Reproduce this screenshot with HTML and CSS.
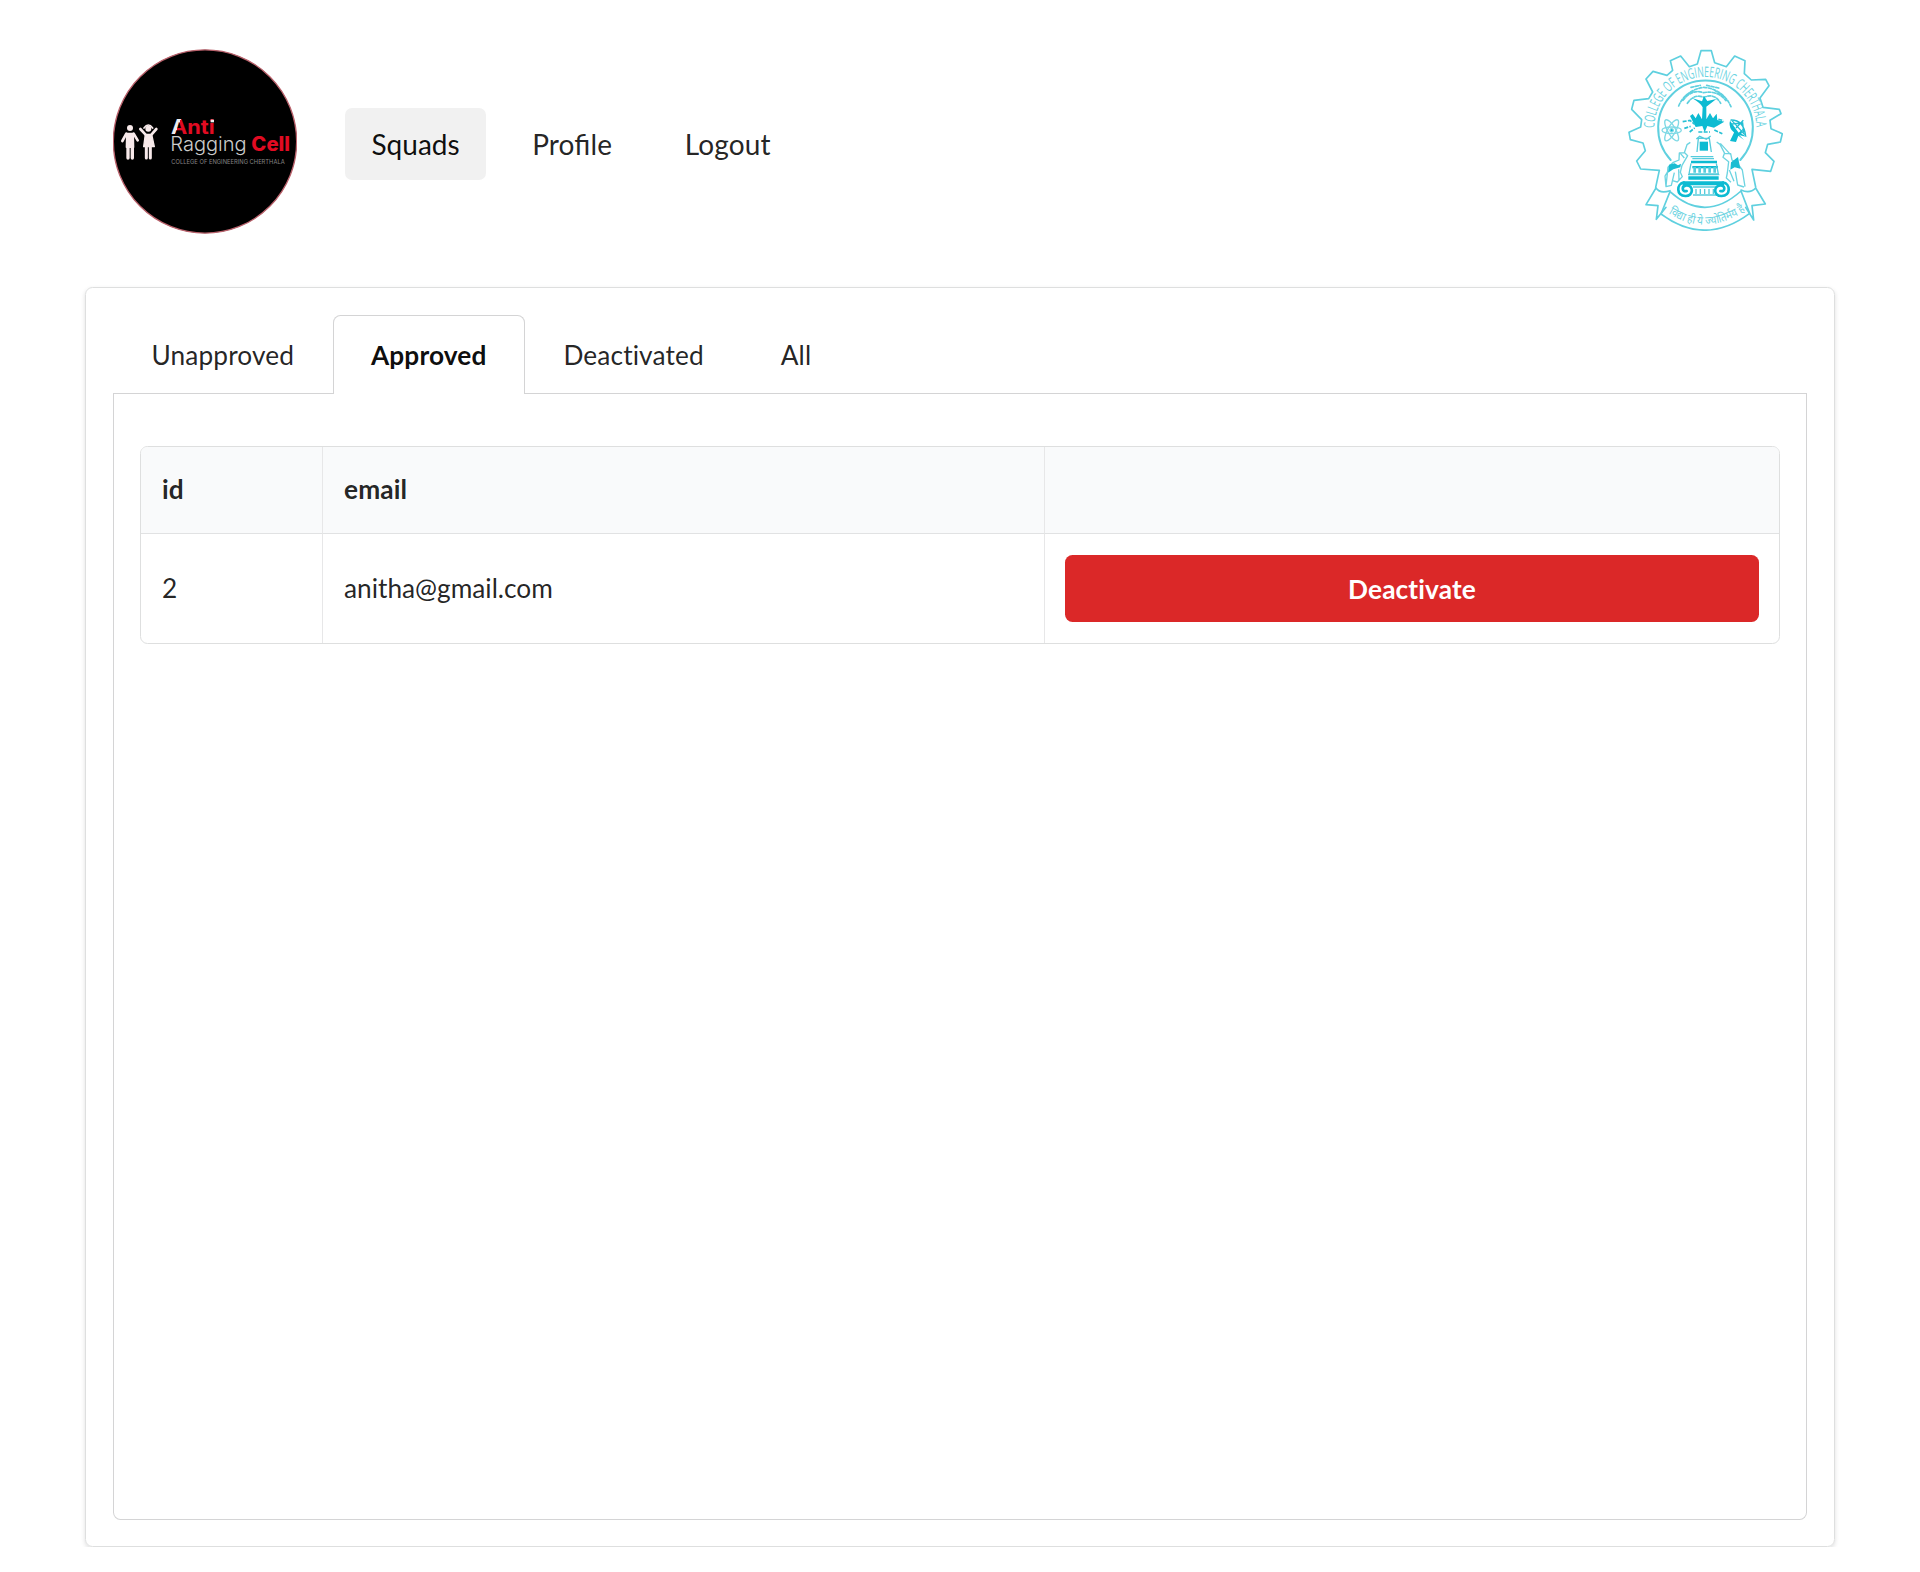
FILE: index.html
```
<!DOCTYPE html>
<html lang="en">
<head>
<meta charset="utf-8">
<title>Anti Ragging Cell</title>
<link rel="stylesheet" href="styles.css">
</head>
<body>
<header class="header">
  <svg class="logo" viewBox="39 27 552 555" role="img" aria-label="Anti Ragging Cell">
    <defs>
      <linearGradient id="anti" gradientUnits="userSpaceOnUse" x1="230" y1="258" x2="238" y2="261">
        <stop offset="0.45" stop-color="#eee"/><stop offset="0.55" stop-color="#e10b22"/>
      </linearGradient>
    </defs>
    <circle cx="315" cy="304.500" r="275" fill="#000" stroke="#b9616b" stroke-width="4"/>
    <g fill="#f7e9ea" stroke="#f7e9ea" stroke-linecap="round" stroke-linejoin="round">
      <circle cx="90" cy="264" r="9" stroke="none"/>
      <path d="M80 280h20l1 42H79z" stroke-width="4"/>
      <path d="M79 281L67 303M101 281L113 301" fill="none" stroke-width="8"/>
      <path d="M84 320v34M97 320v34" fill="none" stroke-width="10"/>
      <circle cx="145" cy="266" r="9" stroke="none"/>
      <path d="M136 283h19l8 37h-32z" stroke-width="4"/>
      <path d="M136 283L121 267M155 283L169 267" fill="none" stroke-width="8"/>
      <path d="M132 264Q145 246 158 264" fill="none" stroke-width="5"/>
      <path d="M139 320v34M151 320v34" fill="none" stroke-width="9"/>
    </g>
    <text class="logo-anti" x="213" y="283" textLength="131" lengthAdjust="spacingAndGlyphs" fill="url(#anti)">Anti</text>
    <rect x="332" y="239" width="10" height="8" fill="#eee"/>
    <text class="logo-ragging" x="211" y="332" textLength="229" lengthAdjust="spacingAndGlyphs">Ragging</text>
    <text class="logo-cell" x="454" y="332" textLength="116" lengthAdjust="spacingAndGlyphs">Cell</text>
    <text class="logo-college" x="214" y="373" textLength="340" lengthAdjust="spacingAndGlyphs">COLLEGE OF ENGINEERING CHERTHALA</text>
  </svg>
  <nav class="nav">
    <a class="nav-item active">Squads</a>
    <a class="nav-item">Profile</a>
    <a class="nav-item">Logout</a>
  </nav>
  <svg class="emblem" viewBox="54 27 465 546" role="img" aria-label="College of Engineering Cherthala">
    <defs>
      <path id="ring" d="M133 264A153 153 0 0 1 439 264"/>
      <path id="ribbon" d="M172 518Q285 592 402 514"/>
    </defs>
    <g fill="none" stroke="#5fd0df" stroke-width="5" stroke-linejoin="round" stroke-linecap="round">
      <path d="M137 442L148 391L92 387L80 363L106 332L99 309L61 299L57 277L92 261L95 239L65 208L72 181L116 176L128 156L108 117L129 94L171 106L188 91L181 62L212 48L238 80L262 72L273 32H304L314 68L349 80L374 48L405 62L403 101L424 120L467 118L477 137L450 174L459 202L508 208L513 221L480 241L483 266L517 281L511 306L473 313L466 338L492 364L482 394L426 388L437 441"/>
      <path d="M182 360A142 142 0 1 1 391 360" stroke-width="6"/>
      <path d="M138 444L108 494L144 497L139 538L168 502M138 444Q150 462 180 452M437 444L466 492L426 497L431 540L407 502M437 444Q420 462 393 450"/>
      <path d="M180 455Q285 550 393 453L419 520Q285 620 153 522Z"/>
    </g>
    <text class="emblem-name"><textPath href="#ring" textLength="478" lengthAdjust="spacingAndGlyphs">COLLEGE OF ENGINEERING CHERTHALA</textPath></text>
    <text class="emblem-motto"><textPath href="#ribbon" startOffset="4" textLength="246" lengthAdjust="spacingAndGlyphs">विद्या ही ये ज्योतिर्मय है</textPath></text>
    <!-- tree -->
    <g fill="none" stroke="#5fd0df" stroke-width="5" stroke-linecap="round" stroke-dasharray="9 5">
      <path d="M206 198Q226 150 282 142Q340 148 363 200M219 181Q246 146 280 158Q322 150 348 182M232 190Q252 160 282 172Q314 158 332 190M228 166L250 154M314 151L340 168M243 142L271 136M290 136L330 145"/>
    </g>
    <path d="M246 174Q274 191 278 202L276 238L265 219L257 235L248 222L240 228L257 261L277 258L284 277L292 258L312 263L343 245L322 240L320 221L309 235L300 219L289 238V200L319 177L292 183L282 168L276 184Z" fill="#0dbbd2"/>
    <path d="M218 245L240 241L254 253M223 265L242 259M325 238L341 242M239 276L254 264M313 270L337 281M265 276L300 276" fill="none" stroke="#27c0d4" stroke-width="5" stroke-dasharray="12 4"/>
    <!-- atom -->
    <g fill="none" stroke="#7fd9e5" stroke-width="4">
      <ellipse cx="185" cy="271" rx="12" ry="36" transform="rotate(-30 185 271)"/>
      <ellipse cx="185" cy="271" rx="12" ry="36" transform="rotate(30 185 271)"/>
      <ellipse cx="185" cy="271" rx="29" ry="10"/>
      <circle cx="185" cy="271" r="5" fill="#0dbbd2"/>
    </g>
    <!-- dish -->
    <path d="M361 238Q349 279 402 289L413 292L394 281L401 265L386 278L361 244M374 274L360 303L378 306L385 287L402 300L384 281Z" fill="#0dbbd2"/>
    <path d="M362 240Q401 239 407 288M364 252L398 249L401 278M366 242L404 284M378 264L400 241" fill="none" stroke="#22bed3" stroke-width="4"/>
    <!-- pedestal -->
    <g fill="#0dbbd2">
      <path d="M269 305h25v27h-25z"/><path d="M243 362h78v8h-78zM235 409h91v10h-91zM218 424h124v12H218z"/>
      <path d="M247 378h77v7h-77z"/>
    </g>
    <g fill="none" stroke="#55ccdc" stroke-width="4">
      <path d="M261 336L265 295H298L304 336M259 297L269 289L289 298L302 288M242 350H310M247 356H312M243 370L237 402H325L319 370M234 404H328"/>
      <path d="M254 381v17M269 381v17M284 381v17M299 381v17M314 381v17" stroke-width="8"/>
      <path d="M258 447v15M271 447v15M284 447v15M297 447v15M310 447v15M249 441H322M249 465H322" stroke-width="4"/>
    </g>
    <g fill="none" stroke="#0dbbd2" stroke-width="8" stroke-linecap="round">
      <path d="M222 428C199 430 198 468 226 468C251 469 252 435 229 436C213 438 216 457 230 453M339 428C362 430 363 468 335 468C309 469 310 435 333 436C348 438 345 457 331 453"/>
    </g>
    <!-- attendants -->
    <g fill="none" stroke="#6dd4e1" stroke-width="4" stroke-linejoin="round">
      <path d="M241 307L231 314L223 338L208 339L207 360L190 367L174 382L168 438M224 338L233 347L216 376L211 397L217 410L202 426L187 422M193 398L184 436L168 440L165 408L173 395M211 340L223 354M320 306L330 313L344 340L362 341L366 360L383 371L397 390L405 440M344 338L339 352L356 365L352 399L349 414L363 427M376 395L383 435L402 441M331 310L361 343M206 388L207 422M358 390L372 424"/>
    </g>
    <path d="M177 374L194 370L204 376L213 371L211 382L190 388L174 398ZM363 367L384 351L391 386L374 382L361 389Z" fill="#1bbdd2"/>
  </svg>
</header>
<main class="segment">
  <div class="tabs">
    <a class="tab">Unapproved</a>
    <a class="tab active">Approved</a>
    <a class="tab">Deactivated</a>
    <a class="tab">All</a>
  </div>
  <section class="panel">
    <table class="table">
      <colgroup><col class="col-id"><col class="col-email"><col></colgroup>
      <thead><tr><th>id</th><th>email</th><th></th></tr></thead>
      <tbody><tr><td>2</td><td>anitha@gmail.com</td><td><button class="button">Deactivate</button></td></tr></tbody>
    </table>
  </section>
</main>
</body>
</html>
```
FILE: styles.css
```
* { box-sizing: border-box; }
body {
  margin: 0;
  padding: 49px 85px 0;
  background: #fff;
  color: rgba(0, 0, 0, .87);
  font: 26.25px/1.2 Lato, sans-serif;
}
.header { display: flex; align-items: flex-start; height: 238px; padding: 0 52px 0 28px; }
.logo { width: 184px; height: 185px; }
.logo-anti { font: 700 60px Inter, sans-serif; }
.logo-ragging { font: 300 59px Inter, sans-serif; fill: #ccc; }
.logo-cell { font: 800 60px Inter, sans-serif; fill: #e10b22; }
.logo-college { font: 400 18px Inter, sans-serif; fill: #858585; }
.nav { display: flex; gap: 19.500px; margin: 59px auto 0 48px; }
.nav-item {
  height: 72px;
  padding: 0 26.500px;
  border-radius: 7px;
  font-size: 28px;
  line-height: 73px;
  letter-spacing: .15px;
  font-feature-settings: "liga" 1;
}
.nav-item.active { background: #f1f1f1; color: rgba(0, 0, 0, .95); letter-spacing: 0; }
.emblem { width: 155px; height: 182px; }
.emblem-name { font: 400 44px "Open Sans", sans-serif; fill: #6bd3e1; }
.emblem-motto { font: 400 35px "Noto Sans", sans-serif; fill: #6bd3e1; }
.segment {
  display: flex;
  flex-direction: column;
  height: 1260px;
  padding: 27px 27px 26px;
  border: 1px solid #dedfdf;
  border-radius: 7.500px;
  box-shadow: 0 2px 4px rgba(34, 36, 38, .15);
}
.tabs { display: flex; height: 79px; border-bottom: 1px solid #d4d4d5; }
.tab {
  height: 79px;
  padding: 0 37.500px;
  border: 1px solid transparent;
  border-bottom: 0;
  line-height: 78px;
  letter-spacing: .12px;
}
.tab.active {
  border-color: #d4d4d5;
  border-radius: 7.500px 7.500px 0 0;
  background: #fff;
  color: rgba(0, 0, 0, .95);
  font-weight: 700;
}
.panel {
  flex: 1;
  padding: 52px 26px;
  border: 1px solid #d4d4d5;
  border-top: 0;
  border-radius: 0 0 7.500px 7.500px;
}
.table {
  width: 100%;
  table-layout: fixed;
  border: 1px solid #dedfdf;
  border-radius: 7.500px;
  border-collapse: separate;
  border-spacing: 0;
  text-align: left;
}
.col-id { width: 181px; }
.col-email { width: 722px; }
th, td { padding: 0 20px 0 21px; border-left: 1px solid #e7e7e8; }
td:last-child { padding-left: 20px; }
th:first-child, td:first-child { border-left: 0; }
th { height: 87px; background: #f9fafb; border-bottom: 1px solid #e1e2e3; letter-spacing: .15px; }
th:first-child { border-top-left-radius: 6px; }
th:last-child { border-top-right-radius: 6px; }
td { height: 109px; }
.button {
  display: block;
  width: 100%;
  height: 67px;
  padding: 0;
  border: 0;
  border-radius: 7.500px;
  background: #db2828;
  color: #fff;
  font: 700 26.25px/68px Lato, sans-serif;
  letter-spacing: .12px;
}
```
